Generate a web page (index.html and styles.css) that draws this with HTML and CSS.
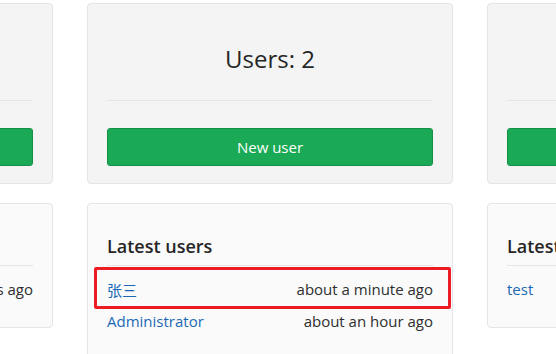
FILE: index.html
```html
<!DOCTYPE html>
<html>
<head>
<meta charset="utf-8">
<link rel="stylesheet" href="styles.css">
</head>
<body>
<div class="page">
  <div class="row top">
    <div class="card stat">
      <h2 class="stat-title">Projects: 3</h2>
      <div class="divider"></div>
      <button class="btn-success">New project</button>
    </div>
    <div class="card stat">
      <h2 class="stat-title">Users: 2</h2>
      <div class="divider"></div>
      <button class="btn-success">New user</button>
    </div>
    <div class="card stat">
      <h2 class="stat-title">Groups: 1</h2>
      <div class="divider"></div>
      <button class="btn-success">New group</button>
    </div>
  </div>
  <div class="row bottom">
    <div class="card latest">
      <h3 class="latest-title">Latest projects</h3>
      <div class="divider"></div>
      <ul class="list">
        <li class="item"><a class="link">Administrator / demo</a><span class="time">about 2 hours ago</span></li>
      </ul>
    </div>
    <div class="card latest">
      <h3 class="latest-title">Latest users</h3>
      <div class="divider"></div>
      <ul class="list">
        <li class="item"><a class="link">张三</a><span class="time">about a minute ago</span><span class="highlight"></span></li>
        <li class="item"><a class="link">Administrator</a><span class="time">about an hour ago</span></li>
      </ul>
    </div>
    <div class="card latest">
      <h3 class="latest-title">Latest groups</h3>
      <div class="divider"></div>
      <ul class="list">
        <li class="item"><a class="link">test</a><span class="time">about an hour ago</span></li>
      </ul>
    </div>
  </div>
</div>
</body>
</html>
```

FILE: styles.css
```css
html, body {
  margin: 0;
  padding: 0;
  background: #ffffff;
  overflow: hidden;
}
body {
  font-family: "Open Sans", "Noto Sans CJK SC", sans-serif;
  color: #2e2e2e;
  font-size: 15px;
}
.page {
  padding-top: 3px;
  width: 1300px;
}
.row {
  display: flex;
  gap: 34px;
  margin-left: -313px;
}
.row.bottom {
  margin-top: 19px;
  align-items: flex-start;
}
.card {
  flex: 0 0 366px;
  box-sizing: border-box;
  border: 1px solid #e5e5e5;
  border-radius: 4px;
}
.stat {
  background: #f4f4f4;
  padding: 19px 19px 17px;
}
.latest {
  background: #fafafa;
  padding: 19px 19px 22px;
}
.stat-title {
  margin: 18px 0 23px;
  font-size: 24px;
  line-height: 36px;
  font-weight: 500;
  text-align: center;
  color: #262626;
}
.divider {
  height: 1px;
  background: #e5e5e5;
}
.stat .divider {
  margin-bottom: 27px;
}
.btn-success {
  display: block;
  width: 100%;
  height: 38px;
  box-sizing: border-box;
  background: #1aaa55;
  border: 1px solid #168f48;
  border-radius: 3px;
  color: #ffffff;
  font-family: inherit;
  font-size: 15px;
  padding: 0;
}
.latest-title {
  margin: 10px 0 6px;
  font-size: 18px;
  line-height: 26px;
  font-weight: 600;
  color: #262626;
}
.list {
  list-style: none;
  margin: 7px 0 0;
  padding: 0;
}
.item {
  position: relative;
  display: flex;
  justify-content: space-between;
  align-items: center;
  height: 32px;
  white-space: nowrap;
}
.link {
  color: #1b69b6;
  text-decoration: none;
}
.time {
  color: #2e2e2e;
}
.highlight {
  position: absolute;
  top: -6px;
  bottom: -4px;
  left: -13px;
  right: -18px;
  border: 3px solid #ec1c24;
  border-radius: 2px;
}
```
